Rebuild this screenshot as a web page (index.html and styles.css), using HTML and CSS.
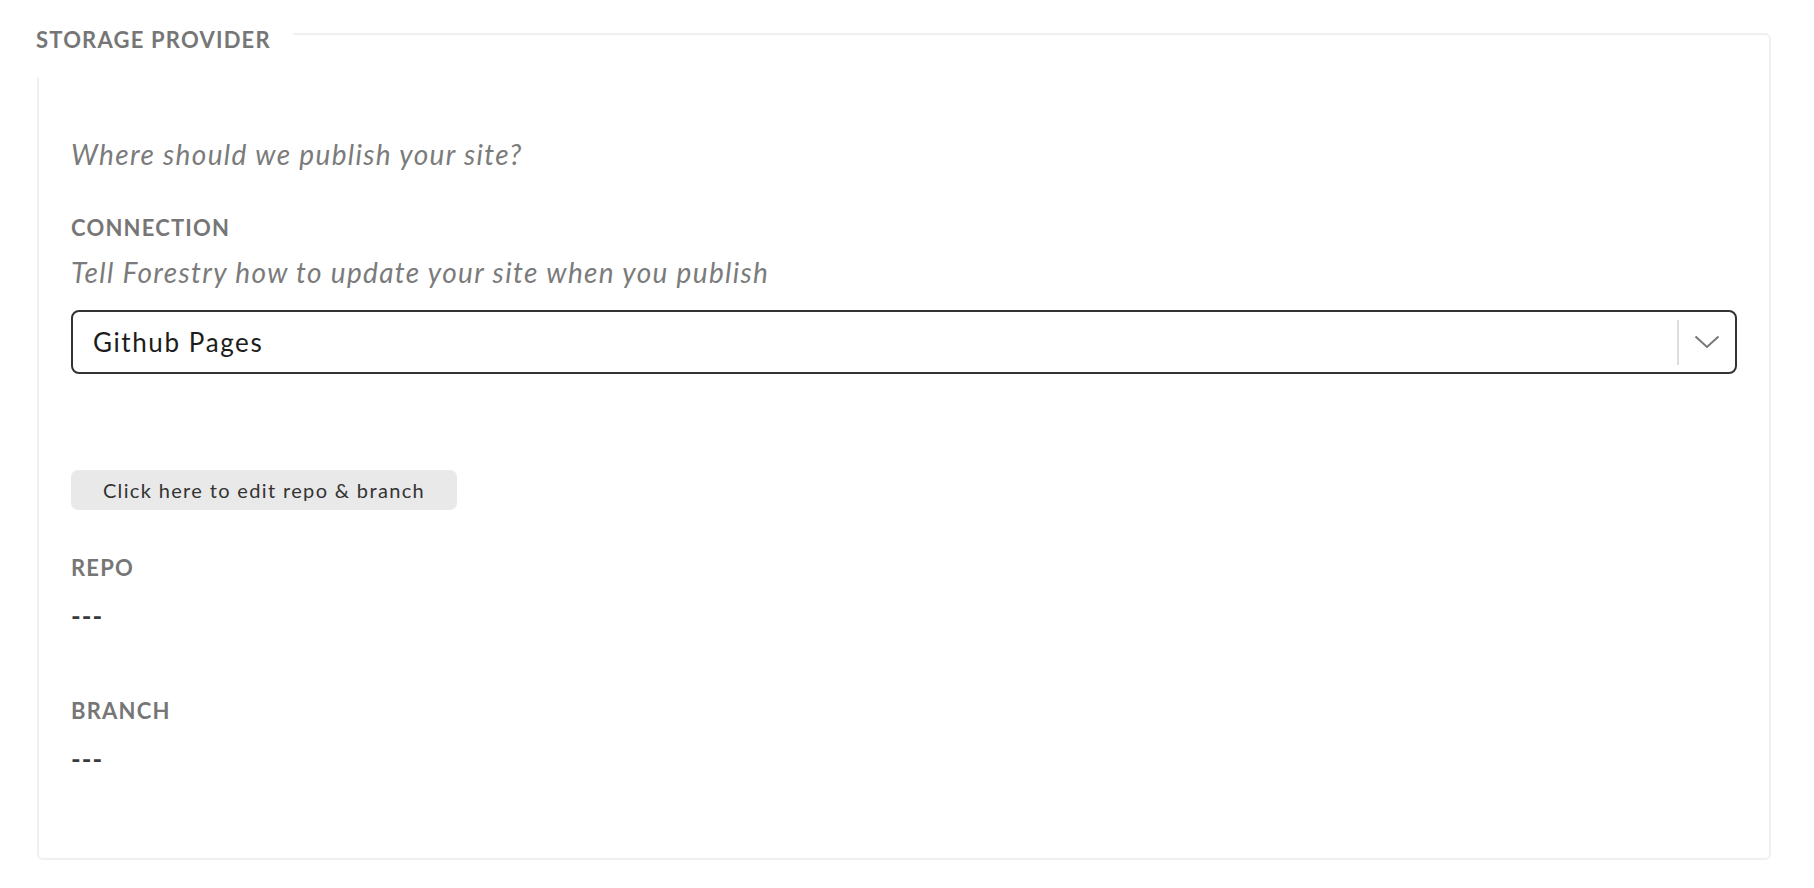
FILE: index.html
```html
<!DOCTYPE html>
<html lang="en">
<head>
<meta charset="utf-8">
<title>Storage Provider</title>
<link rel="stylesheet" href="styles.css">
</head>
<body>
<section class="panel">
  <h2 class="legend">STORAGE PROVIDER</h2>
  <p class="intro">Where should we publish your site?</p>
  <div class="field">
    <h3 class="label">CONNECTION</h3>
    <p class="hint">Tell Forestry how to update your site when you publish</p>
    <div class="select">
      <span class="select-value">Github Pages</span>
      <span class="select-sep"></span>
      <span class="select-arrow">
        <svg width="26" height="14" viewBox="0 0 26 14"><path d="M1.5 1.5 L13 12 L24.5 1.5" fill="none" stroke="#777" stroke-width="2"/></svg>
      </span>
    </div>
  </div>
  <button class="edit-btn" type="button">Click here to edit repo &amp; branch</button>
  <div class="info info-repo">
    <h3 class="label">REPO</h3>
    <p class="value">---</p>
  </div>
  <div class="info info-branch">
    <h3 class="label">BRANCH</h3>
    <p class="value">---</p>
  </div>
</section>
</body>
</html>
```

FILE: styles.css
```css
html, body {
  margin: 0;
  padding: 0;
  background: #fff;
}
body {
  font-family: Lato, "Open Sans", sans-serif;
  color: #333;
}
.panel {
  position: relative;
  margin: 33px 43px 0 37px;
  height: 827px;
  box-sizing: border-box;
  border: 2px solid #f0f0f0;
  border-radius: 6px;
  padding: 101px 32px 0 32px;
  display: flex;
  flex-direction: column;
}
.legend {
  position: absolute;
  left: -3px;
  top: -9px;
  margin: 0;
  padding: 0 22px 23px 0;
  background: #fff;
  font-size: 22px;
  line-height: 28px;
  font-weight: 700;
  letter-spacing: 1.2px;
  color: #767676;
}
.intro, .hint {
  margin: 0;
  font-size: 28px;
  line-height: 36px;
  font-style: italic;
  letter-spacing: 1.35px;
  color: #7b7b7b;
}
.field {
  margin-top: 42px;
  display: flex;
  flex-direction: column;
}
.label {
  margin: 0;
  font-size: 22px;
  line-height: 28px;
  font-weight: 700;
  letter-spacing: 1.2px;
  color: #767676;
}
.hint {
  margin-top: 12px;
}
.select {
  margin-top: 20px;
  height: 64px;
  box-sizing: border-box;
  border: 2px solid #333;
  border-radius: 8px;
  display: flex;
  align-items: center;
  padding-left: 20px;
}
.select-value {
  flex: 1;
  font-size: 26px;
  line-height: 32px;
  letter-spacing: 1.6px;
  color: #1c1c1c;
}
.select-sep {
  width: 2px;
  height: 45px;
  background: #ddd;
}
.select-arrow {
  width: 56px;
  display: flex;
  justify-content: center;
  align-items: center;
}
.select-arrow svg {
  display: block;
}
.edit-btn {
  align-self: flex-start;
  margin-top: 96px;
  height: 40px;
  width: 386px;
  border: none;
  border-radius: 7px;
  background: #e9e9e9;
  font-family: Lato, "Open Sans", sans-serif;
  font-size: 20px;
  letter-spacing: 1.35px;
  color: #333;
  padding: 0;
  cursor: pointer;
}
.info {
  display: flex;
  flex-direction: column;
}
.info-repo {
  margin-top: 44px;
}
.info-branch {
  margin-top: 63px;
}
.value {
  margin: 16px 0 0 0;
  font-size: 26px;
  line-height: 36px;
  font-weight: 700;
  color: #3a3a3a;
  letter-spacing: 1px;
}
```
